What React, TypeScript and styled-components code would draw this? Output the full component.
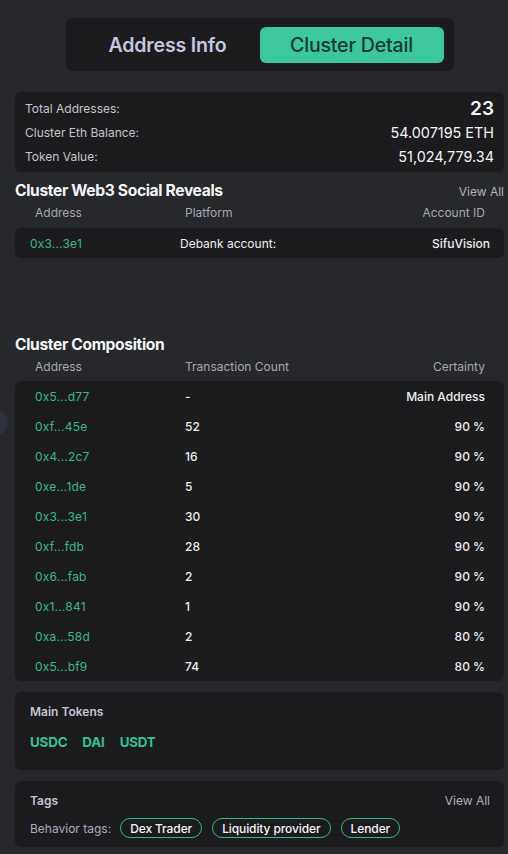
import styled, { createGlobalStyle } from "styled-components";

const GlobalStyle = createGlobalStyle`
  html, body {
    margin: 0;
    padding: 0;
    background: #27282c;
    font-family: Inter, "Noto Sans", "Liberation Sans", sans-serif;
    color: #f1f1f3;
  }
`;

// Top most level element
const Page = styled.div`
  position: relative;
  width: 508px;
  height: 854px;
  overflow: hidden;
  box-sizing: border-box;
  padding: 18px 4px 0 15px;
  display: flex;
  flex-direction: column;
`;

// Half hidden round button on the left edge
const EdgeKnob = styled.div`
  position: absolute;
  left: -19px;
  top: 409px;
  width: 27px;
  height: 27px;
  border-radius: 50%;
  background: #2e3140;
`;

// Switch between the two views
const TabBar = styled.div`
  align-self: center;
  width: 388px;
  height: 53px;
  box-sizing: border-box;
  padding: 9px 10px 8px 10px;
  border-radius: 6px;
  background: #1c1c1f;
  display: flex;
  align-items: stretch;
`;

const Tab = styled.div<{ $active?: boolean }>`
  flex: 1;
  display: flex;
  align-items: center;
  justify-content: center;
  font-size: 19.6px;
  font-weight: ${(p) => (p.$active ? 500 : 600)};
  letter-spacing: -0.2px;
  border-radius: 6px;
  background: ${(p) => (p.$active ? "#3cc89c" : "transparent")};
  color: ${(p) => (p.$active ? "#1b3a31" : "#c5c7de")};
`;

const Card = styled.div`
  background: #1c1c1f;
  border-radius: 6px;
`;

const SummaryCard = styled(Card)`
  margin-top: 21px;
  padding: 4px 10px;
`;

const SummaryRow = styled.div`
  height: 24px;
  display: flex;
  align-items: center;
  justify-content: space-between;
`;

const SummaryLabel = styled.span`
  font-size: 12px;
  color: #c4c4ca;
`;

const SummaryValue = styled.span<{ $big?: boolean }>`
  font-size: ${(p) => (p.$big ? "19px" : "14.4px")};
  font-weight: ${(p) => (p.$big ? 600 : 400)};
  color: #f4f4f6;
`;

const SectionHead = styled.div<{ $gap: number }>`
  margin-top: ${(p) => p.$gap}px;
  height: 20px;
  display: flex;
  align-items: center;
  justify-content: space-between;
`;

const SectionTitle = styled.h2`
  margin: 0;
  margin-top: -1px;
  font-size: 15.6px;
  font-weight: 700;
  letter-spacing: -0.35px;
  color: #f4f4f6;
`;

const ViewAll = styled.span`
  font-size: 12px;
  color: #aeb0bf;
`;

// Column grid shared by table headers and rows
const Columns = styled.div<{ $pad: string }>`
  display: grid;
  grid-template-columns: 150px 1fr auto;
  align-items: center;
  padding: ${(p) => p.$pad};
`;

const HeaderRow = styled(Columns)<{ $after: number }>`
  height: 22px;
  margin-bottom: ${(p) => p.$after}px;
  font-size: 12px;
  color: #a6a7b2;
`;

const HeaderRight = styled.span`
  text-align: right;
`;

const TableCard = styled(Card)``;

const Row = styled(Columns)`
  height: 30px;
  font-size: 12px;
  color: #eeeef0;
`;

const Addr = styled.span`
  color: #3bb689;
  letter-spacing: 0.2px;
`;

const RightCell = styled.span`
  text-align: right;
  font-weight: 500;
`;

const Cell = styled.span<{ $weight?: number }>`
  font-weight: ${(p) => p.$weight ?? 500};
`;

const Spacer = styled.div`
  height: 77px;
`;

const BoxCard = styled(Card)<{ $gap: number }>`
  margin-top: ${(p) => p.$gap}px;
  padding: 10px 14px 0 15px;
`;

const BoxHead = styled.div`
  height: 18px;
  display: flex;
  align-items: center;
  justify-content: space-between;
`;

const BoxTitle = styled.span`
  font-size: 12px;
  font-weight: 600;
  color: #c3c4d2;
`;

const TokenList = styled.div`
  display: flex;
  gap: 15px;
  margin-top: 12px;
  height: 20px;
  align-items: center;
  padding-bottom: 18px;
`;

const Token = styled.span`
  font-size: 13.4px;
  font-weight: 700;
  color: #36c08f;
  letter-spacing: -0.2px;
`;

const TagLine = styled.div`
  display: flex;
  align-items: center;
  gap: 10px;
  margin-top: 9px;
  height: 20px;
  padding-bottom: 9px;
`;

const TagLabel = styled.span`
  font-size: 12px;
  color: #a9abbd;
  margin-right: -1px;
`;

const Pill = styled.span`
  height: 18px;
  display: inline-flex;
  align-items: center;
  padding: 0 9px;
  border: 1px solid #36b98a;
  border-radius: 10px;
  font-size: 12px;
  font-weight: 500;
  letter-spacing: -0.1px;
  color: #f4f4f6;
`;

const composition = [
  { addr: "0x5...d77", count: "-", certainty: "Main Address" },
  { addr: "0xf...45e", count: "52", certainty: "90 %" },
  { addr: "0x4...2c7", count: "16", certainty: "90 %" },
  { addr: "0xe...1de", count: "5", certainty: "90 %" },
  { addr: "0x3...3e1", count: "30", certainty: "90 %" },
  { addr: "0xf...fdb", count: "28", certainty: "90 %" },
  { addr: "0x6...fab", count: "2", certainty: "90 %" },
  { addr: "0x1...841", count: "1", certainty: "90 %" },
  { addr: "0xa...58d", count: "2", certainty: "80 %" },
  { addr: "0x5...bf9", count: "74", certainty: "80 %" },
];

const App = () => {
  return (
    <Page>
      <GlobalStyle />
      <EdgeKnob />
      <TabBar>
        <Tab>Address Info</Tab>
        <Tab $active>Cluster Detail</Tab>
      </TabBar>

      <SummaryCard>
        <SummaryRow>
          <SummaryLabel>Total Addresses:</SummaryLabel>
          <SummaryValue $big>23</SummaryValue>
        </SummaryRow>
        <SummaryRow>
          <SummaryLabel>Cluster Eth Balance:</SummaryLabel>
          <SummaryValue>54.007195 ETH</SummaryValue>
        </SummaryRow>
        <SummaryRow>
          <SummaryLabel>Token Value:</SummaryLabel>
          <SummaryValue>51,024,779.34</SummaryValue>
        </SummaryRow>
      </SummaryCard>

      {/* Web3 social reveals */}
      <SectionHead $gap={9}>
        <SectionTitle>Cluster Web3 Social Reveals</SectionTitle>
        <ViewAll>View All</ViewAll>
      </SectionHead>
      <HeaderRow $pad="0 19px 0 20px" $after={5}>
        <span>Address</span>
        <span>Platform</span>
        <HeaderRight>Account ID</HeaderRight>
      </HeaderRow>
      <TableCard>
        <Row $pad="0 14px 0 15px">
          <Addr>0x3...3e1</Addr>
          <Cell $weight={400}>Debank account:</Cell>
          <RightCell>SifuVision</RightCell>
        </Row>
      </TableCard>
      <Spacer />

      {/* Composition table */}
      <SectionHead $gap={0}>
        <SectionTitle>Cluster Composition</SectionTitle>
      </SectionHead>
      <HeaderRow $pad="0 19px 0 20px" $after={4}>
        <span>Address</span>
        <span>Transaction Count</span>
        <HeaderRight>Certainty</HeaderRight>
      </HeaderRow>
      <TableCard>
        {composition.map((r) => (
          <Row key={r.addr + r.count} $pad="0 19px 0 20px">
            <Addr>{r.addr}</Addr>
            <Cell>{r.count}</Cell>
            <RightCell>{r.certainty}</RightCell>
          </Row>
        ))}
      </TableCard>

      <BoxCard $gap={11}>
        <BoxHead>
          <BoxTitle>Main Tokens</BoxTitle>
        </BoxHead>
        <TokenList>
          <Token>USDC</Token>
          <Token>DAI</Token>
          <Token>USDT</Token>
        </TokenList>
      </BoxCard>

      <BoxCard $gap={11}>
        <BoxHead>
          <BoxTitle>Tags</BoxTitle>
          <ViewAll>View All</ViewAll>
        </BoxHead>
        <TagLine>
          <TagLabel>Behavior tags:</TagLabel>
          <Pill>Dex Trader</Pill>
          <Pill>Liquidity provider</Pill>
          <Pill>Lender</Pill>
        </TagLine>
      </BoxCard>
    </Page>
  );
};

export default App;
